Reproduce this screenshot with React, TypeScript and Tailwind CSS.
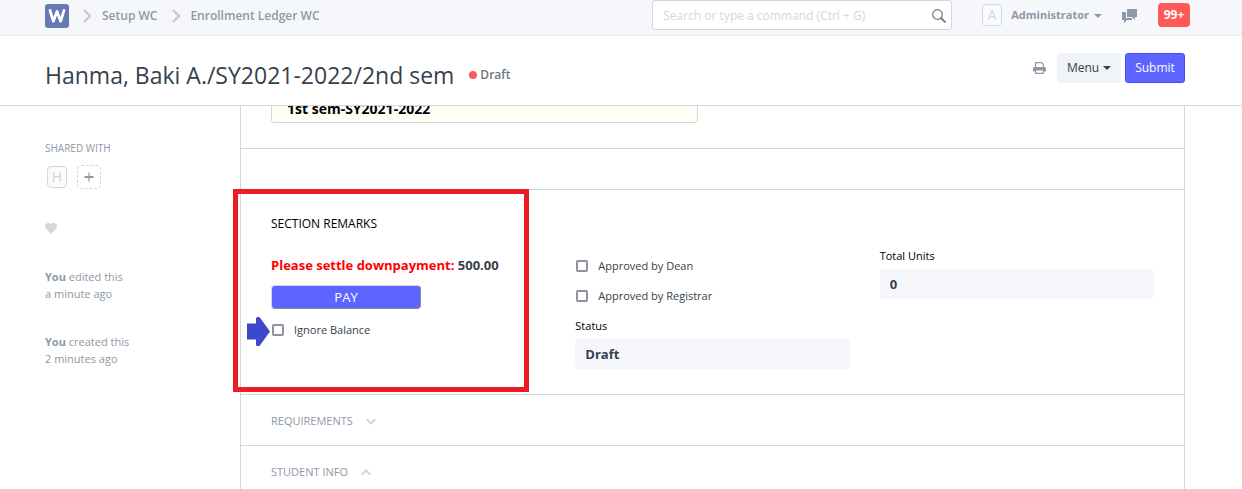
import React from "react";

function Chevron({ className }: { className?: string }) {
  return (
    <svg viewBox="0 0 10 14" className={className} fill="none" stroke="currentColor" strokeWidth="2">
      <path d="M1 1 L7 7 L1 13" />
    </svg>
  );
}

function Caret({ className }: { className?: string }) {
  return (
    <svg viewBox="0 0 8 4" className={className} fill="currentColor">
      <path d="M0 0h8L4 4z" />
    </svg>
  );
}

function Navbar() {
  return (
    <header className="h-9 border-b border-[#ebeff2] bg-[#f5f7fa]">
      <div className="mx-auto flex h-[30px] max-w-[1140px] items-center justify-between text-[11px] font-bold text-[#8d99a6]">
        <nav className="flex items-center pt-px text-xs font-semibold" aria-label="Breadcrumb">
          <a href="#" aria-label="Home" className="mr-[14px]">
            <svg viewBox="0 0 24 24" className="h-6 w-6">
              <rect width="24" height="24" rx="3" fill="#6679b4" />
              <path
                d="M5 6.4 L8.300 17.200 L12 7.400 L15.700 17.200 L19 6.400"
                fill="none"
                stroke="#fff"
                strokeWidth="2.8"
                strokeLinecap="round"
                strokeLinejoin="round"
              />
            </svg>
          </a>
          <Chevron className="mr-[9px] h-[14px] w-[10px] text-[#c0c8d0]" />
          <a href="#">Setup WC</a>
          <Chevron className="mr-2 ml-[15px] h-[14px] w-[10px] text-[#c0c8d0]" />
          <a href="#">Enrollment Ledger WC</a>
        </nav>
        <div className="-mr-[5px] flex h-full items-center">
          <div className="mr-[30px] flex h-[30px] w-[300px] items-center rounded-[3px] border border-[#d1d8dd] bg-white pt-px pr-[5px]">
            <input
              type="text"
              aria-label="Search"
              placeholder="Search or type a command (Ctrl + G)"
              className="min-w-0 flex-1 px-[10px] text-xs font-normal outline-none placeholder:text-[#d1d8dd]"
            />
            <svg viewBox="0 0 14 14" className="h-[14px] w-[14px] text-[#6c7680]" fill="none" stroke="currentColor">
              <circle cx="5.5" cy="5.5" r="4.8" strokeWidth="1.2" />
              <path d="M9 9l4.5 4.5" strokeWidth="1.8" />
            </svg>
          </div>
          <span className="mr-[9px] flex h-[22px] w-5 items-center justify-center rounded border border-[#d1d8dd] bg-[#fafbfc] text-sm font-normal text-[#d1d8dd]">
            A
          </span>
          <button type="button" className="mr-5 flex items-center gap-[5px] pt-px">
            Administrator
            <Caret className="h-1 w-2" />
          </button>
          <button type="button" aria-label="Chat" className="mr-5 pt-px">
            <svg viewBox="0 0 16 14" className="h-[14px] w-4" fill="currentColor">
              <path d="M5 0h10v8h-2v3l-3-3H5z" />
              <path d="M0 3h4v6h6v2H5l-3 3v-3H0z" />
            </svg>
          </button>
          <button type="button" className="h-6 w-8 rounded bg-[#ff5858] text-xs text-white">
            99+
          </button>
        </div>
      </div>
    </header>
  );
}

function PageHead() {
  return (
    <div className="border-b border-[#d1d8dd] bg-white">
      <div className="mx-auto flex h-[69px] max-w-[1140px] items-center justify-between">
        <div className="flex items-center pt-2">
          <h1 className="text-[23px] leading-8 text-[#36414c]">Hanma, Baki A./SY2021-2022/2nd sem</h1>
          <span className="ml-[15px] flex items-center gap-[3px] text-xs font-semibold text-[#6c7680]">
            <span className="h-2 w-2 rounded-full bg-[#ff5858]" />
            Draft
          </span>
        </div>
        <div className="flex items-center pb-[5px] text-xs">
          <button type="button" aria-label="Print" className="mr-[11px] text-[#8d99a6]">
            <svg viewBox="0 0 13 12" className="h-3 w-[13px]">
              <path d="M2.5 5V.6h6l2 2V5" fill="none" stroke="currentColor" strokeWidth="1.1" />
              <path d="M1 5h11l1 1v3.5H0V6z" fill="currentColor" />
              <path d="M2.5 8h8v3.4h-8z" fill="#fff" stroke="currentColor" strokeWidth="1.1" />
            </svg>
          </button>
          <button type="button" className="mr-1 flex h-[30px] w-16 items-center justify-center gap-1 rounded-[3px] bg-[#f0f4f7] text-[#36414c]">
            Menu
            <Caret className="h-1 w-2" />
          </button>
          <button type="button" className="h-[30px] w-[60px] rounded-[3px] border border-[#444bff] bg-[#5e64ff] text-white">
            Submit
          </button>
        </div>
      </div>
    </div>
  );
}

function Sidebar() {
  return (
    <aside className="w-[195px] shrink-0 pt-[34px] text-[11px] text-[#8d99a6]">
      <h2 className="text-[10px] leading-4">SHARED WITH</h2>
      <div className="mt-[9px] flex items-center gap-[10px] pl-[2px]">
        <span className="flex h-[22px] w-5 items-center justify-center rounded border border-[#d1d8dd] bg-[#fafbfc] text-sm text-[#d1d8dd]">
          H
        </span>
        <button
          type="button"
          aria-label="Share"
          className="flex h-6 w-6 items-center justify-center rounded border border-dashed border-[#d1d8dd]"
        >
          <svg viewBox="0 0 10 10" className="h-[10px] w-[10px]" stroke="currentColor">
            <path d="M5 .5v9" strokeWidth="1.2" />
            <path d="M.5 5h9" strokeWidth="2" />
          </svg>
        </button>
      </div>
      <button type="button" aria-label="Like" className="mt-[34px] block text-[#d1d8dd]">
        <svg viewBox="0 0 12 11" className="h-[11px] w-3" fill="currentColor">
          <path d="M6 11L.9 5.8C-.3 4.500-.2 2 1 .8 2.500-.4 4.800-.2 6 1.500 7.200-.2 9.500-.4 11 .8c1.200 1.200 1.300 3.700.1 5z" />
        </svg>
      </button>
      <p className="mt-[34px] leading-[17px]">
        <strong>You</strong> edited this
        <br />a minute ago
      </p>
      <p className="mt-[31px] leading-[17px]">
        <strong>You</strong> created this
        <br />2 minutes ago
      </p>
    </aside>
  );
}

function Check({ label }: { label: string }) {
  return (
    <label className="flex h-[18px] items-center gap-[10px] pl-px text-[11px] text-[#36414c]">
      <input type="checkbox" className="h-3 w-3 appearance-none rounded-[2px] border-2 border-[#8f8f9d] bg-white" />
      {label}
    </label>
  );
}

function ReadOnlyField({ id, label, value }: { id: string; label: string; value: string }) {
  return (
    <div>
      <label htmlFor={id} className="block text-[11px] leading-[18px] text-black">
        {label}
      </label>
      <input
        id={id}
        readOnly
        value={value}
        className="mt-1 block h-[30px] w-full rounded-[3px] bg-[#f5f7fa] px-[10px] text-[13px] font-bold text-[#36414c] outline-none"
      />
    </div>
  );
}

function Remarks() {
  return (
    <section className="relative grid grid-cols-3 gap-[30px] border-b border-[#d1d8dd] px-[30px] pt-[25px] pb-[25px]">
      <div>
        <h3 className="text-xs leading-[18px] text-black">SECTION REMARKS</h3>
        <p className="mt-[23px] text-[13px] leading-[18px] font-bold whitespace-nowrap text-[#36414c]">
          <span className="text-[#ff0000]">Please settle downpayment:</span> 500.00
        </p>
        <button
          type="button"
          className="mt-[11px] mb-3 block h-6 w-[150px] rounded border border-t-[#d1d8dd] border-r-[#8d8d99] border-b-[#8d8d99] border-l-[#d1d8dd] bg-[#5e64ff] text-[13px] leading-5 text-white"
        >
          PAY
        </button>
        <Check label="Ignore Balance" />
      </div>
      <div className="flex flex-col pt-[42px]">
        <Check label="Approved by Dean" />
        <div className="my-3">
          <Check label="Approved by Registrar" />
        </div>
        <ReadOnlyField id="status" label="Status" value="Draft" />
      </div>
      <div className="pt-8">
        <ReadOnlyField id="total-units" label="Total Units" value="0" />
      </div>
      <div className="pointer-events-none absolute -top-px -left-2 h-[203px] w-[296px] border-[5px] border-[#ed1c24]" />
      <svg viewBox="0 0 23 29" className="pointer-events-none absolute top-[127px] left-[6px] h-[29px] w-[23px]" fill="#3f48cc">
        <path d="M0 6.500h9V1.500Q9 0 10.500 0h2L23 14.500 12.500 29h-2Q9 29 9 27.500v-5H0z" />
      </svg>
    </section>
  );
}

function Collapsible({ title, open }: { title: string; open: boolean }) {
  return (
    <section className="border-b border-[#d1d8dd] pt-[17px] pr-[30px] pb-[15px] pl-[30px]">
      <button type="button" aria-expanded={open} className="flex h-[18px] items-center gap-[13px] text-[11px] text-[#8d99a6]">
        {title}
        <svg viewBox="0 0 10 7" className="h-[7px] w-[10px] text-[#d1d8dd]" fill="none" stroke="currentColor" strokeWidth="2">
          <path d={open ? "M.8 5.800L5 1.500l4.200 4.300" : "M.8 1.200L5 5.500l4.200-4.300"} />
        </svg>
      </button>
    </section>
  );
}

export default function App() {
  return (
    <div className="flex h-screen flex-col overflow-hidden bg-white font-['Open_Sans','Noto_Sans',sans-serif] [&>*]:pr-3">
      <Navbar />
      <PageHead />
      <div className="min-h-0 flex-1">
        <div className="mx-auto flex h-full max-w-[1140px]">
          <Sidebar />
          <main className="min-w-0 flex-1 border-x border-[#d1d8dd]">
            <section className="grid grid-cols-2 gap-[30px] border-b border-[#d1d8dd] px-[30px] pb-[25px]">
              <div className="flex h-[17px] items-end overflow-hidden">
                <input
                  aria-label="Semester"
                  defaultValue="1st sem-SY2021-2022"
                  className="h-[30px] w-full shrink-0 rounded-[3px] border border-[#d1d8dd] bg-[#fffdf4] px-[15px] pt-px text-[14px] font-bold text-black outline-none"
                />
              </div>
            </section>
            <section className="h-[41px] border-b border-[#d1d8dd]" />
            <Remarks />
            <Collapsible title="REQUIREMENTS" open={false} />
            <Collapsible title="STUDENT INFO" open />
          </main>
        </div>
      </div>
    </div>
  );
}
